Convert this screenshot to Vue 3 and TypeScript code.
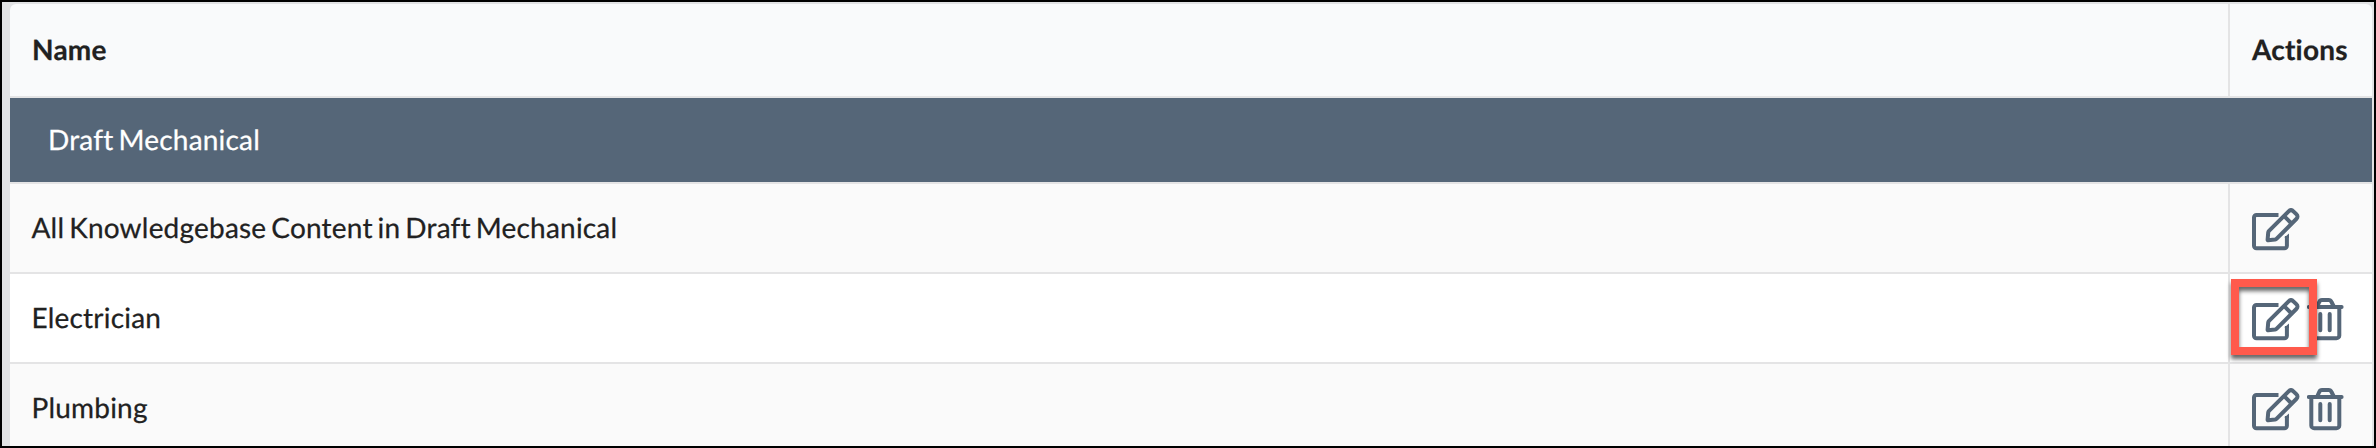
<script setup lang="ts">
interface Row {
  name: string
  removable: boolean
  highlighted: boolean
}

const groupName = 'Draft Mechanical'
const rows: Row[] = [
  { name: 'All Knowledgebase Content in Draft Mechanical', removable: false, highlighted: false },
  { name: 'Electrician', removable: true, highlighted: true },
  { name: 'Plumbing', removable: true, highlighted: false },
]
</script>

<template>
  <div class="frame">
    <div class="table">
      <div class="row header">
        <div class="cell name">Name</div>
        <div class="cell actions">Actions</div>
      </div>
      <div class="row group">{{ groupName }}</div>
      <div v-for="row in rows" :key="row.name" class="row item">
        <div class="cell name">{{ row.name }}</div>
        <div class="cell actions">
          <svg class="icon edit" viewBox="0 0 48 43" width="48" height="43">
            <path d="M26.5 7H4.5A2.5 2.5 0 0 0 2 9.5V37.8A2.5 2.5 0 0 0 4.5 40.3H32.4A2.5 2.5 0 0 0 34.9 37.8V28" />
            <path class="nub" d="M32.8 30V29L37 25.6V30Z" />
            <path d="M15.6 31.9 16.2 24.6Q16.3 23.6 17 22.9L36.6 3.3Q39 .9 41.4 3.3L44.3 6.2Q46.7 8.6 44.3 11L24.7 30.6Q24 31.3 23 31.5L16.2 32.2Q15.6 32.3 15.6 31.9ZM32.2 8.2 39.5 15.5" />
          </svg>
          <svg v-if="row.removable" class="icon trash" viewBox="0 0 37 43" width="37" height="43">
            <path class="round" d="M1.8 9H34.6" />
            <path d="M10.2 8.5 12.2 4Q13 2.1 15 2.1H21.6Q23.6 2.1 24.5 4L26.8 8.5M4.3 10V37.4A2.9 2.9 0 0 0 7.2 40.3H29.4A2.9 2.9 0 0 0 32.3 37.4V10" />
            <path class="round" d="M13.3 16.1V32.3M22.7 16.1V32.3" />
          </svg>
          <div v-if="row.highlighted" class="highlight"></div>
        </div>
      </div>
    </div>
  </div>
</template>

<style>
body {
  margin: 0;
}
</style>

<style scoped>
.frame {
  box-sizing: border-box;
  width: 2376px;
  height: 448px;
  border: 2px solid #000;
  padding: 2px 2px 0 8px;
  background: #e1e2e4;
  overflow: hidden;
  font-family: Lato, "Liberation Sans", sans-serif;
  font-size: 28px;
  line-height: 40px;
  font-variant-ligatures: none;
  letter-spacing: 0.2px;
  word-spacing: -2.4px;
  text-rendering: geometricPrecision;
  -webkit-text-stroke: 0.25px currentColor;
  color: #212121;
}

.table {
  border-radius: 6px 6px 0 0;
  overflow: hidden;
}

.row {
  box-sizing: border-box;
  display: flex;
  height: 90px;
  border-bottom: 2px solid #e4e4e5;
}

.header {
  height: 94px;
  background: #f9fafb;
  font-weight: 700;
}

.group {
  height: 86px;
  align-items: center;
  padding: 0 0 2px 38px;
  background: #556678;
  color: #fff;
}

.item {
  background: #fafafa;
}

.item:nth-child(even) {
  background: #fff;
}

.item:nth-child(odd) {
  background: #fafafa;
}

.cell {
  box-sizing: border-box;
  display: flex;
  align-items: center;
  padding-bottom: 2px;
}

.name {
  flex: 1;
  padding-left: 22px;
}

.item .name {
  padding-left: 21.5px;
}

.actions {
  position: relative;
  width: 144px;
  padding-left: 22px;
  border-left: 2px solid #e4e4e5;
}

.item .actions {
  align-items: flex-start;
  padding-top: 24px;
  gap: 7px;
}

.icon {
  flex: none;
  fill: none;
  stroke: #556678;
  stroke-width: 4;
  stroke-linejoin: round;
}

.icon .nub {
  fill: #556678;
  stroke: none;
}

.round {
  stroke-linecap: round;
}

.highlight {
  position: absolute;
  box-sizing: border-box;
  left: 1px;
  top: 5px;
  width: 86px;
  height: 76px;
  border: 8px solid #ff5a4c;
  filter: drop-shadow(0 4px 2px rgba(0, 0, 0, 0.6));
}
</style>
